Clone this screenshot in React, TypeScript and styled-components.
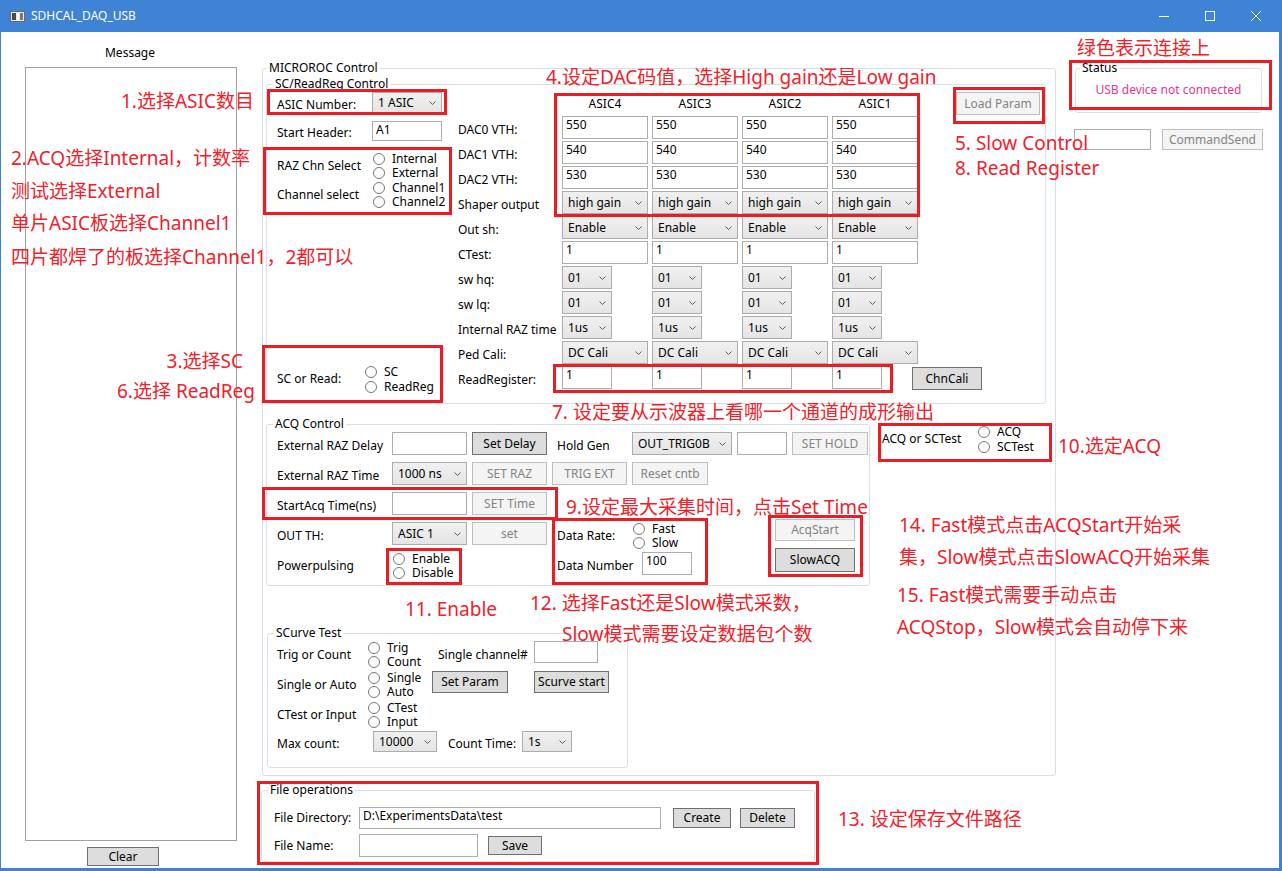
import React from 'react';
import styled, { createGlobalStyle } from 'styled-components';

const GlobalStyle = createGlobalStyle`
  html, body {
    margin: 0;
    padding: 0;
    background: #ffffff;
  }
  body {
    font-family: "Noto Sans", "Noto Sans CJK SC", sans-serif;
    font-size: 12px;
    color: #000000;
  }
  * {
    box-sizing: border-box;
  }
`;

const Window = styled.div`
  position: relative;
  width: 1282px;
  height: 871px;
  background: #3f83d4;
  display: flex;
  flex-direction: column;
  overflow: hidden;
`;

const TitleBar = styled.div`
  height: 32px;
  flex: none;
  display: flex;
  align-items: center;
  color: #ffffff;
  padding-left: 10px;
`;

const Title = styled.div`
  margin-left: 6px;
  line-height: 16px;
`;

const WinButtons = styled.div`
  margin-left: auto;
  margin-right: 3px;
  display: flex;
  height: 32px;
`;

const WinButton = styled.div`
  width: 46px;
  height: 32px;
  display: flex;
  align-items: center;
  justify-content: center;
`;

const Client = styled.div`
  flex: 1;
  margin: 0 3px 3px 1px;
  background: #ffffff;
  display: flex;
  align-items: flex-start;
`;

const MessagePane = styled.div`
  margin-left: 24px;
  width: 212px;
  padding-top: 13px;
  display: flex;
  flex-direction: column;
`;

const PaneTitle = styled.div`
  line-height: 16px;
  text-align: center;
  padding-right: 2px;
`;

const MessageBox = styled.div`
  margin-top: 6px;
  height: 774px;
  border: 1px solid #a0a0a0;
  background: #ffffff;
`;

const MainColumn = styled.div`
  margin-left: 23px;
  margin-top: 36px;
  width: 796px;
  display: flex;
  flex-direction: column;
`;

const RightColumn = styled.div`
  margin-left: 18px;
  margin-top: 36px;
  display: flex;
  flex-direction: column;
`;

const Group = styled.div<{ $w: number; $ml?: number; $mt?: number }>`
  width: ${p => p.$w}px;
  margin-left: ${p => p.$ml ?? 0}px;
  margin-top: ${p => p.$mt ?? 0}px;
  border: 1px solid #d5dfe5;
  border-radius: 3px;
  flex: none;
`;

const Legend = styled.div<{ $indent?: number }>`
  display: table;
  margin: -9px 0 0 ${p => p.$indent ?? 6}px;
  padding: 0 2px;
  height: 16px;
  line-height: 16px;
  background: #ffffff;
  white-space: nowrap;
`;

const MicroBody = styled.div`
  padding: 0 0 7px 3px;
`;

const Label = styled.div<{ $w?: number; $pl?: number; $ml?: number }>`
  display: flex;
  align-items: center;
  padding-top: 4px;
  padding-left: ${p => p.$pl ?? 0}px;
  margin-left: ${p => p.$ml ?? 0}px;
  line-height: 16px;
  white-space: nowrap;
  ${p => (p.$w ? `width: ${p.$w}px; flex: none;` : '')}
`;

const Caption = styled.div<{ $w?: number; $pl?: number }>`
  display: flex;
  align-items: center;
  padding-left: ${p => p.$pl ?? 0}px;
  line-height: 16px;
  white-space: nowrap;
  ${p => (p.$w ? `width: ${p.$w}px; flex: none;` : '')}
`;

const Field = styled.div<{ $w: number; $h?: number; $ml?: number }>`
  width: ${p => p.$w}px;
  height: ${p => p.$h ?? 23}px;
  margin-left: ${p => p.$ml ?? 0}px;
  flex: none;
  border: 1px solid #abadb3;
  background: #ffffff;
  padding: 0 0 0 3px;
  line-height: 16px;
  white-space: nowrap;
  overflow: hidden;
`;

const ComboBox = styled.div<{ $w: number; $h?: number }>`
  width: ${p => p.$w}px;
  height: ${p => p.$h ?? 23}px;
  flex: none;
  border: 1px solid #acacac;
  background: linear-gradient(#f0f0f0, #e5e5e5);
  display: flex;
  align-items: center;
  justify-content: space-between;
  padding: 0 5px 0 5px;
  line-height: 16px;
  white-space: nowrap;
`;

const Btn = styled.button<{ $w: number; $h?: number; $off?: boolean; $ml?: number; $mt?: number }>`
  width: ${p => p.$w}px;
  height: ${p => p.$h ?? 23}px;
  margin: ${p => p.$mt ?? 0}px 0 0 ${p => p.$ml ?? 0}px;
  flex: none;
  padding: 0;
  font: inherit;
  line-height: 16px;
  white-space: nowrap;
  border: 1px solid ${p => (p.$off ? '#bfbfbf' : '#707070')};
  background: ${p => (p.$off ? '#f4f4f4' : '#dddddd')};
  color: ${p => (p.$off ? '#838383' : '#000000')};
  display: flex;
  align-items: center;
  justify-content: center;
`;

const RadioStack = styled.div<{ $ml?: number }>`
  display: flex;
  flex-direction: column;
  margin-left: ${p => p.$ml ?? 0}px;
`;

const RadioItem = styled.div<{ $h?: number }>`
  height: ${p => p.$h ?? 14}px;
  display: flex;
  align-items: center;
  white-space: nowrap;
  line-height: 14px;
`;

const Dot = styled.span`
  width: 12px;
  height: 12px;
  flex: none;
  border-radius: 50%;
  border: 1px solid #777777;
  background: #ffffff;
  margin-right: 7px;
`;

/* SC / ReadReg */
const ScBody = styled.div`
  height: 311px;
  display: flex;
`;

const LeftBlock = styled.div`
  width: 191px;
  padding-left: 10px;
  display: flex;
  flex-direction: column;
`;

const FormRow = styled.div<{ $mt?: number }>`
  display: flex;
  margin-top: ${p => p.$mt ?? 0}px;
`;

const ChoiceGrid = styled.div<{ $labelW: number; $mt?: number; $bottom?: boolean }>`
  display: grid;
  grid-template-columns: ${p => p.$labelW}px auto;
  row-gap: 1px;
  margin-top: ${p => (p.$bottom ? 'auto' : `${p.$mt ?? 0}px`)};
  margin-bottom: ${p => (p.$bottom ? 9 : 0)}px;
`;

const ParamGrid = styled.div`
  display: grid;
  grid-template-columns: 100px repeat(4, 86px);
  grid-template-rows: 22px repeat(11, 23px);
  column-gap: 4px;
  row-gap: 2px;
  align-self: flex-start;
`;

const ColHead = styled.div`
  display: flex;
  align-items: center;
  justify-content: center;
`;

const Cell = styled.div`
  display: flex;
  align-items: flex-start;
`;

const SideBlock = styled.div`
  margin-left: 38px;
`;

/* ACQ */
const AcqRow = styled.div`
  margin-top: 20px;
  display: flex;
  align-items: flex-start;
`;

const AcqGrid = styled.div`
  display: grid;
  grid-template-columns: 110px 75px 75px 75px 100px 50px 76px;
  grid-auto-rows: 23px;
  column-gap: 5px;
  row-gap: 7px;
  padding: 0 0 10px 10px;
`;

const DataArea = styled.div`
  grid-column: 4 / 8;
  grid-row: 4 / 6;
  display: flex;
`;

const DataForm = styled.div`
  width: 223px;
  display: grid;
  grid-template-columns: 80px auto;
  grid-template-rows: 23px 23px;
  row-gap: 7px;
`;

const ButtonStack = styled.div`
  margin-top: -3px;
  display: flex;
  flex-direction: column;
  gap: 7px;
`;

const ModeBlock = styled.div`
  margin-left: 12px;
  display: flex;
`;

/* SCurve */
const CurveGrid = styled.div`
  display: grid;
  grid-template-columns: 91px 64px 102px auto;
  grid-template-rows: 28px 28px 28px 22px;
  row-gap: 2px;
  padding: 0 0 14px 9px;
`;

const CurveFoot = styled.div`
  grid-column: 1 / -1;
  display: flex;
`;

/* Files */
const FileBody = styled.div`
  padding: 9px 0 4px 12px;
  display: flex;
  flex-direction: column;
  gap: 5px;
`;

const FileRow = styled.div`
  display: flex;
  align-items: center;
`;

/* Right side */
const StatusText = styled.div`
  padding: 6px 0 14px;
  text-align: center;
  line-height: 16px;
  color: #e8368f;
`;

const CommandRow = styled.div`
  margin-top: 16px;
  display: flex;
`;

/* annotations laid over the window */
const Overlay = styled.div`
  position: absolute;
  inset: 0;
  pointer-events: none;
`;

const Note = styled.div<{ $x: number; $y: number; $right?: boolean }>`
  position: absolute;
  top: ${p => p.$y}px;
  ${p => (p.$right ? `right: ${1282 - p.$x}px;` : `left: ${p.$x}px;`)}
  font-family: "Noto Sans", "Noto Sans CJK SC", sans-serif;
  font-size: 19px;
  line-height: 24px;
  color: #f0212a;
  white-space: nowrap;
`;

const Mark = styled.div<{ $x: number; $y: number; $w: number; $h: number }>`
  position: absolute;
  left: ${p => p.$x}px;
  top: ${p => p.$y}px;
  width: ${p => p.$w}px;
  height: ${p => p.$h}px;
  border: 3px solid #ec1c24;
`;

const Chevron = () => (
  <svg width="7" height="4" viewBox="0 0 7 4">
    <path d="M0.5 0.5 L3.5 3.5 L6.5 0.5" fill="none" stroke="#5a5a5a" strokeWidth="1" />
  </svg>
);

const Combo = ({ w, h, children }: { w: number; h?: number; children: React.ReactNode }) => (
  <ComboBox $w={w} $h={h}>
    <span>{children}</span>
    <Chevron />
  </ComboBox>
);

const Radios = ({ items, h, ml }: { items: string[]; h?: number; ml?: number }) => (
  <RadioStack $ml={ml}>
    {items.map(t => (
      <RadioItem key={t} $h={h}>
        <Dot />
        {t}
      </RadioItem>
    ))}
  </RadioStack>
);

const asics = ['ASIC4', 'ASIC3', 'ASIC2', 'ASIC1'];

const notes: { x: number; y: number; t: string; right?: boolean }[] = [
  { x: 1077, y: 36, t: '绿色表示连接上' },
  { x: 546, y: 65, t: '4.设定DAC码值，选择High gain还是Low gain' },
  { x: 121, y: 89, t: '1.选择ASIC数目' },
  { x: 11, y: 146, t: '2.ACQ选择Internal，计数率' },
  { x: 11, y: 179, t: '测试选择External' },
  { x: 11, y: 211, t: '单片ASIC板选择Channel1' },
  { x: 11, y: 245, t: '四片都焊了的板选择Channel1，2都可以' },
  { x: 955, y: 131, t: '5. Slow Control' },
  { x: 955, y: 156, t: '8. Read Register' },
  { x: 243, y: 349, t: '3.选择SC', right: true },
  { x: 255, y: 379, t: '6.选择 ReadReg', right: true },
  { x: 552, y: 400, t: '7. 设定要从示波器上看哪一个通道的成形输出' },
  { x: 566, y: 495, t: '9.设定最大采集时间，点击Set Time' },
  { x: 1058, y: 434, t: '10.选定ACQ' },
  { x: 405, y: 597, t: '11. Enable' },
  { x: 530, y: 591, t: '12. 选择Fast还是Slow模式采数，' },
  { x: 562, y: 622, t: 'Slow模式需要设定数据包个数' },
  { x: 899, y: 513, t: '14. Fast模式点击ACQStart开始采' },
  { x: 899, y: 545, t: '集，Slow模式点击SlowACQ开始采集' },
  { x: 897, y: 583, t: '15. Fast模式需要手动点击' },
  { x: 897, y: 615, t: 'ACQStop，Slow模式会自动停下来' },
  { x: 838, y: 807, t: '13. 设定保存文件路径' },
];

const marks = [
  { x: 267, y: 89, w: 180, h: 26 },
  { x: 263, y: 147, w: 189, h: 68 },
  { x: 554, y: 93, w: 366, h: 124 },
  { x: 953, y: 87, w: 92, h: 37 },
  { x: 262, y: 345, w: 181, h: 58 },
  { x: 553, y: 364, w: 340, h: 29 },
  { x: 262, y: 487, w: 296, h: 33 },
  { x: 386, y: 548, w: 76, h: 37 },
  { x: 552, y: 518, w: 156, h: 67 },
  { x: 768, y: 515, w: 95, h: 62 },
  { x: 878, y: 423, w: 174, h: 39 },
  { x: 1069, y: 60, w: 203, h: 50 },
  { x: 257, y: 781, w: 562, h: 84 },
];

const App = () => {
  return (
    <>
      <GlobalStyle />
      <Window>
        <TitleBar>
          <svg width="15" height="11" viewBox="0 0 15 11">
            <rect x="0.5" y="0.5" width="14" height="10" fill="#e6e6e6" stroke="#6b6b6b" />
            <rect x="2" y="2" width="4" height="7" fill="#4a4a4a" />
            <rect x="7" y="2" width="2" height="7" fill="#ffffff" />
            <rect x="10" y="2" width="3" height="7" fill="#7a7a7a" />
          </svg>
          <Title>SDHCAL_DAQ_USB</Title>
          <WinButtons>
            <WinButton>
              <svg width="10" height="10" viewBox="0 0 10 10">
                <path d="M0 5.5 H10" stroke="#fff" strokeWidth="1" />
              </svg>
            </WinButton>
            <WinButton>
              <svg width="10" height="10" viewBox="0 0 10 10">
                <rect x="0.5" y="0.5" width="9" height="9" fill="none" stroke="#fff" strokeWidth="1" />
              </svg>
            </WinButton>
            <WinButton>
              <svg width="10" height="10" viewBox="0 0 10 10">
                <path d="M0 0 L10 10 M10 0 L0 10" stroke="#fff" strokeWidth="1" />
              </svg>
            </WinButton>
          </WinButtons>
        </TitleBar>

        <Client>
          <MessagePane>
            <PaneTitle>Message</PaneTitle>
            <MessageBox />
            <Btn $w={72} $h={19} $ml={62} $mt={6}>Clear</Btn>
          </MessagePane>

          <MainColumn>
            <Group $w={794} $ml={2}>
              <Legend $indent={4}>MICROROC Control</Legend>
              <MicroBody>
                <Group $w={780} $mt={8}>
                  <Legend>SC/ReadReg Control</Legend>
                  <ScBody>
                    <LeftBlock>
                      <FormRow>
                        <Label $w={95}>ASIC Number:</Label>
                        <Combo w={70} h={22}>1 ASIC</Combo>
                      </FormRow>
                      <FormRow $mt={7}>
                        <Label $w={95}>Start Header:</Label>
                        <Field $w={70} $h={20}>A1</Field>
                      </FormRow>
                      <ChoiceGrid $labelW={96} $mt={11}>
                        <Caption>RAZ Chn Select</Caption>
                        <Radios items={['Internal', 'External']} />
                        <Caption>Channel select</Caption>
                        <Radios items={['Channel1', 'Channel2']} />
                      </ChoiceGrid>
                      <ChoiceGrid $labelW={88} $bottom>
                        <Caption>SC or Read:</Caption>
                        <Radios items={['SC', 'ReadReg']} h={15} />
                      </ChoiceGrid>
                    </LeftBlock>

                    <ParamGrid>
                      <div />
                      {asics.map(a => (
                        <ColHead key={a}>{a}</ColHead>
                      ))}

                      <Label>DAC0 VTH:</Label>
                      {asics.map(a => <Field key={a} $w={86}>550</Field>)}
                      <Label>DAC1 VTH:</Label>
                      {asics.map(a => <Field key={a} $w={86}>540</Field>)}
                      <Label>DAC2 VTH:</Label>
                      {asics.map(a => <Field key={a} $w={86}>530</Field>)}

                      <Label>Shaper output</Label>
                      {asics.map(a => <Combo key={a} w={86}>high gain</Combo>)}
                      <Label>Out sh:</Label>
                      {asics.map(a => <Combo key={a} w={86}>Enable</Combo>)}
                      <Label>CTest:</Label>
                      {asics.map(a => <Field key={a} $w={86}>1</Field>)}

                      <Label>sw hq:</Label>
                      {asics.map(a => <Cell key={a}><Combo w={50}>01</Combo></Cell>)}
                      <Label>sw lq:</Label>
                      {asics.map(a => <Cell key={a}><Combo w={50}>01</Combo></Cell>)}
                      <Label>Internal RAZ time</Label>
                      {asics.map(a => <Cell key={a}><Combo w={50}>1us</Combo></Cell>)}
                      <Label>Ped Cali:</Label>
                      {asics.map(a => <Combo key={a} w={86}>DC Cali</Combo>)}

                      <Label>ReadRegister:</Label>
                      {asics.map(a => (
                        <Cell key={a}>
                          <Field $w={50}>1</Field>
                          {a === 'ASIC1' && <Btn $w={70} $ml={30} $mt={1}>ChnCali</Btn>}
                        </Cell>
                      ))}
                    </ParamGrid>

                    <SideBlock>
                      <Btn $w={84} $off>Load Param</Btn>
                    </SideBlock>
                  </ScBody>
                </Group>

                <AcqRow>
                  <Group $w={604}>
                    <Legend>ACQ Control</Legend>
                    <AcqGrid>
                      <Label>External RAZ Delay</Label>
                      <Field $w={75} />
                      <Btn $w={75}>Set Delay</Btn>
                      <Label $pl={5}>Hold Gen</Label>
                      <Combo w={100}>OUT_TRIG0B</Combo>
                      <Field $w={50} />
                      <Btn $w={76} $off>SET HOLD</Btn>

                      <Label>External RAZ Time</Label>
                      <Combo w={75}>1000 ns</Combo>
                      <Btn $w={75} $off>SET RAZ</Btn>
                      <Btn $w={75} $off>TRIG EXT</Btn>
                      <Btn $w={76} $off>Reset cntb</Btn>
                      <div />
                      <div />

                      <Label>StartAcq Time(ns)</Label>
                      <Field $w={75} />
                      <Btn $w={75} $off>SET Time</Btn>
                      <div />
                      <div />
                      <div />
                      <div />

                      <Label>OUT TH:</Label>
                      <Combo w={75}>ASIC 1</Combo>
                      <Btn $w={75} $off>set</Btn>
                      <DataArea>
                        <DataForm>
                          <Label $pl={5}>Data Rate:</Label>
                          <Radios items={['Fast', 'Slow']} ml={1} />
                          <Label $pl={5}>Data Number</Label>
                          <Field $w={50} $ml={10}>100</Field>
                        </DataForm>
                        <ButtonStack>
                          <Btn $w={80} $h={22} $off>AcqStart</Btn>
                          <Btn $w={80} $h={24}>SlowACQ</Btn>
                        </ButtonStack>
                      </DataArea>

                      <Label>Powerpulsing</Label>
                      <Radios items={['Enable', 'Disable']} ml={1} />
                    </AcqGrid>
                  </Group>

                  <ModeBlock>
                    <Caption $w={96}>ACQ or SCTest</Caption>
                    <Radios items={['ACQ', 'SCTest']} h={15} />
                  </ModeBlock>
                </AcqRow>

                <Group $w={361} $ml={1} $mt={47}>
                  <Legend>SCurve Test</Legend>
                  <CurveGrid>
                    <Caption>Trig or Count</Caption>
                    <Radios items={['Trig', 'Count']} />
                    <Caption $pl={6}>Single channel#</Caption>
                    <Field $w={64} $h={22} />

                    <Caption>Single or Auto</Caption>
                    <Radios items={['Single', 'Auto']} />
                    <Btn $w={76} $h={22}>Set Param</Btn>
                    <Btn $w={75} $h={22}>Scurve start</Btn>

                    <Caption>CTest or Input</Caption>
                    <Radios items={['CTest', 'Input']} />
                    <div />
                    <div />

                    <CurveFoot>
                      <Label $w={96}>Max count:</Label>
                      <Combo w={64} h={21}>10000</Combo>
                      <Label $w={74} $ml={11}>Count Time:</Label>
                      <Combo w={50} h={21}>1s</Combo>
                    </CurveFoot>
                  </CurveGrid>
                </Group>
              </MicroBody>
            </Group>

            <Group $w={554} $ml={1} $mt={14}>
              <Legend>File operations</Legend>
              <FileBody>
                <FileRow>
                  <Caption $w={85}>File Directory:</Caption>
                  <Field $w={302} $h={22}>{'D:\\ExperimentsData\\test'}</Field>
                  <Btn $w={58} $h={20} $ml={12}>Create</Btn>
                  <Btn $w={55} $h={20} $ml={9}>Delete</Btn>
                </FileRow>
                <FileRow>
                  <Caption $w={85}>File Name:</Caption>
                  <Field $w={119} $h={23} />
                  <Btn $w={54} $h={19} $ml={10}>Save</Btn>
                </FileRow>
              </FileBody>
            </Group>
          </MainColumn>

          <RightColumn>
            <Group $w={187} $ml={1}>
              <Legend $indent={4}>Status</Legend>
              <StatusText>USB device not connected</StatusText>
            </Group>
            <CommandRow>
              <Field $w={77} $h={21} />
              <Btn $w={101} $h={21} $ml={11} $off>CommandSend</Btn>
            </CommandRow>
          </RightColumn>
        </Client>

        <Overlay>
          {marks.map((m, i) => (
            <Mark key={i} $x={m.x} $y={m.y} $w={m.w} $h={m.h} />
          ))}
          {notes.map((n, i) => (
            <Note key={i} $x={n.x} $y={n.y} $right={n.right}>
              {n.t}
            </Note>
          ))}
        </Overlay>
      </Window>
    </>
  );
};

export default App;
